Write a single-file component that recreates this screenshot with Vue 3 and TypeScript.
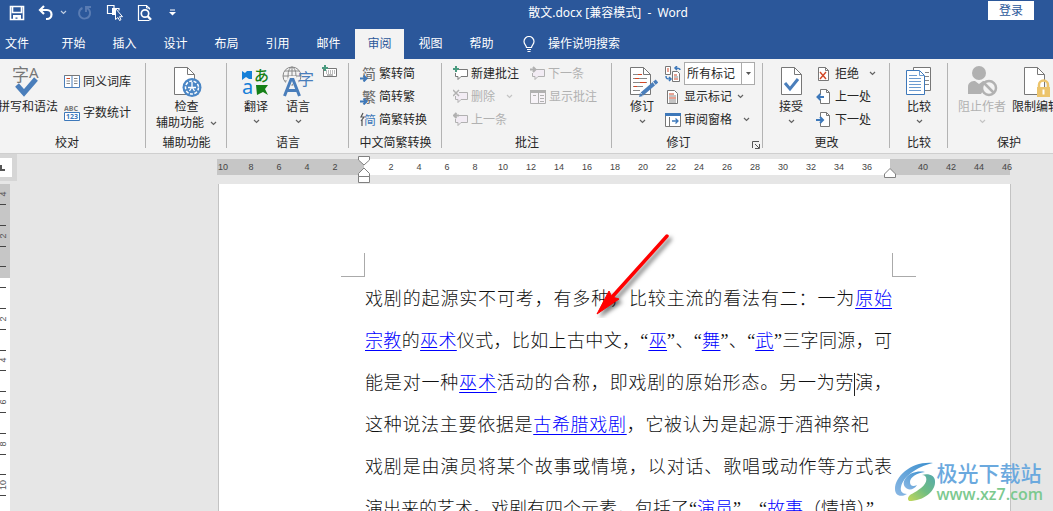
<script setup lang="ts">
import { h, ref } from 'vue'

const Chevron = () =>
  h('svg', { class: 'chevron', width: 7, height: 5, viewBox: '0 0 7 5', 'aria-hidden': 'true' }, [
    h('path', { d: 'M1 1l2.5 2.5L6 1', fill: 'none', stroke: 'currentColor', 'stroke-width': 1.2 }),
  ])

const tabs: string[] = ['开始', '插入', '设计', '布局', '引用', '邮件', '审阅', '视图', '帮助']
const activeTab = ref('审阅')
const markup = ref('所有标记')

const rulerCells: string[] = [
  ...['10', '8', '6', '4', '2', ''],
  ...Array.from({ length: 18 }, (_, i) => String((i + 1) * 2)),
  ...['', '40', '42', '44', '46'],
]

interface Mark { y: number; label: string }
const rulerMarks: Mark[] = [
  { y: 10, label: '4' }, { y: 52, label: '2' }, { y: 135, label: '2' }, { y: 176, label: '4' },
  { y: 218, label: '6' }, { y: 260, label: '8' }, { y: 301, label: '10' },
]
const rulerTicks: number[] = [20, 41, 62, 82, 103, 124, 145, 166, 186, 207, 228, 249, 270, 290, 311]

interface Run { text: string; link?: boolean; caret?: boolean }
const lines: { runs: Run[]; kind?: string }[] = [
  { runs: [{ text: '戏剧的起源实不可考，有多种，比较主流的看法有二：一为' }, { text: '原始', link: true }] },
  {
    runs: [
      { text: '宗教', link: true }, { text: '的' }, { text: '巫术', link: true },
      { text: '仪式，比如上古中文，“' }, { text: '巫', link: true }, { text: '”、“' },
      { text: '舞', link: true }, { text: '”、“' }, { text: '武', link: true }, { text: '”三字同源，可' },
    ],
  },
  {
    runs: [
      { text: '能是对一种' }, { text: '巫术', link: true },
      { text: '活动的合称，即戏剧的原始形态。另一为劳' }, { text: '', caret: true }, { text: '演，' },
    ],
  },
  {
    kind: 'short',
    runs: [
      { text: '这种说法主要依据是' }, { text: '古希腊戏剧', link: true },
      { text: '，它被认为是起源于酒神祭祀' },
    ],
  },
  { runs: [{ text: '戏剧是由演员将某个故事或情境，以对话、歌唱或动作等方式表' }] },
  {
    runs: [
      { text: '演出来的艺术。戏剧有四个元素，包括了“' }, { text: '演员', link: true },
      { text: '”、“' }, { text: '故事', link: true }, { text: '（情境）”、' },
    ],
  },
]
</script>

<template>
  <div class="word">
    <header class="chrome">
      <div class="titlebar">
        <div class="quick">
          <button class="q-save" aria-label="保存">
            <svg width="16" height="16" viewBox="0 0 16 16"><path d="M1.500 1.500h13v13h-13zM3.500 2v5.500h9V2" fill="none" stroke="#fff" stroke-width="1.600" /><path d="M4 10h8v4.500H8.500v-2h-2v2H4z" fill="#fff" /></svg>
          </button>
          <button class="q-undo" aria-label="撤消">
            <svg width="16" height="16" viewBox="0 0 16 16"><path d="M6 1L2 5l4 4M2 5h7a4.500 4.500 0 0 1 0 9H8" fill="none" stroke="#fff" stroke-width="2.200" /></svg>
          </button>
          <button class="q-more" aria-label="撤消选项"><Chevron /></button>
          <button class="q-redo" aria-label="重复">
            <svg width="16" height="16" viewBox="0 0 16 16"><path d="M9 7V2h5M9.500 2.500C12 4 13.500 6 13 9A5.500 5.500 0 1 1 5.500 3" fill="none" stroke="#5a7cb3" stroke-width="1.900" /></svg>
          </button>
          <button class="q-select" aria-label="选择对象">
            <svg width="18" height="18" viewBox="0 0 18 18"><path d="M8 4V1.500H1.500v8H6M6 4.500h7v2" fill="none" stroke="#fff" stroke-width="1.200" /><path d="M6 4h3v7H6z" fill="#fff" /><path d="M9.500 4.500v11l2.500-2 1.500 3 1.500-.8-1.500-3h3z" fill="#2b579a" stroke="#fff" /></svg>
          </button>
          <button class="q-preview" aria-label="打印预览">
            <svg width="16" height="18" viewBox="0 0 16 18"><path d="M12.500 5.500v-1l-3-3h-8v15h11" fill="none" stroke="#fff" stroke-width="1.200" /><path d="M9.500 1v3h3" fill="none" stroke="#fff" /><circle cx="8" cy="9.500" r="3.700" fill="none" stroke="#fff" stroke-width="1.700" /><path d="M10.500 12l3.500 3.800" stroke="#fff" stroke-width="2.400" /></svg>
          </button>
          <button class="q-custom" aria-label="自定义快速访问工具栏">
            <svg width="7" height="7" viewBox="0 0 7 7"><path d="M1 1h5" stroke="#fff" /><path d="M0 3h7L3.500 6.500z" fill="#fff" /></svg>
          </button>
        </div>
        <h1 class="title">散文.docx [兼容模式]&nbsp; -&nbsp; Word</h1>
        <button class="login">登录</button>
      </div>
      <nav class="tabs">
        <button class="tab file">文件</button>
        <button v-for="t in tabs" :key="t" class="tab" :class="{ active: t === activeTab }" @click="activeTab = t">{{ t }}</button>
        <button class="tell">
          <svg width="14" height="17" viewBox="0 0 14 17"><path d="M4.500 11.500c0-2-2.500-3-2.500-6a5 5 0 0 1 10 0c0 3-2.500 4-2.500 6zM5 13.500h4M5.500 15.500h3" fill="none" stroke="#fff" stroke-width="1.200" /></svg>
          <span>操作说明搜索</span>
        </button>
      </nav>
    </header>

    <section class="ribbon">
      <div class="group g-proof">
        <div class="body">
          <button class="big spell">
            <svg width="32" height="32" viewBox="0 0 32 32"><text x="0" y="15" font-size="17" fill="#777">字</text><text x="17" y="12" font-size="15" fill="#777">A</text><path d="M5 19l7 8L24 13" fill="none" stroke="#4a7ebb" stroke-width="5" /></svg>
            <span>拼写和语法</span>
          </button>
          <div class="col tall">
            <button class="small">
              <svg width="16" height="16" viewBox="0 0 16 16"><path d="M.5 1.500h15v12h-15zM8 2v12" fill="#fff" stroke="#4a7ebb" /><path d="M.5 1.500h15" stroke="#777" /><path d="M2.500 4.500H6" stroke="#d24726" /><path d="M2.500 7H6M2.500 9.500H6M10 4.500h3.500M10 7h3.500M10 9.500h3.500" stroke="#888" /></svg>
              <span>同义词库</span>
            </button>
            <button class="small">
              <svg width="16" height="17" viewBox="0 0 16 17"><text x="0" y="7" font-size="7" font-weight="700" fill="#777">ABC</text><path d="M.5 8.500h15v8H.5z" fill="#fff" stroke="#3d78ba" /><text x="2" y="15" font-size="7" font-weight="700" fill="#3d78ba">123</text></svg>
              <span>字数统计</span>
            </button>
          </div>
        </div>
        <div class="label">校对</div>
      </div>

      <div class="group g-access">
        <div class="body">
          <button class="big">
            <svg width="32" height="32" viewBox="0 0 32 32"><path d="M4.500 1.500h13l7 7v20h-20z" fill="#fff" stroke="#777" /><path d="M17.500 1.500v7h7" fill="none" stroke="#777" /><circle cx="22" cy="21.500" r="9.500" fill="#4a86c5" /><circle cx="22" cy="21.500" r="6.500" fill="none" stroke="#fff" stroke-width="1.500" stroke-dasharray="3 1.500" /><path d="M22 16v6M18 21.500h8M22 21l-2.500 4M22 21l2.500 4" stroke="#fff" stroke-width="1.300" /></svg>
            <span>检查</span>
            <span class="with-chev">辅助功能<Chevron /></span>
          </button>
        </div>
        <div class="label">辅助功能</div>
      </div>

      <div class="group g-lang">
        <div class="body">
          <button class="big w42">
            <svg width="32" height="32" viewBox="0 0 32 32"><text x="14" y="15" font-size="15" font-weight="500" fill="#158016">あ</text><text x="2" y="28" font-size="20" fill="#1680d8">a</text><path d="M2 5l3 2 2-2h5v8H9L6 11l-4 3z" fill="#1680d8" /><path d="M16 19h12l-3 4 3 6-5-3-6 3z" fill="#158016" /></svg>
            <span>翻译</span><Chevron />
          </button>
          <button class="big w42">
            <svg width="34" height="32" viewBox="0 0 34 32"><g fill="none" stroke="#888"><circle cx="11" cy="10" r="9" /><ellipse cx="11" cy="10" rx="4" ry="9" /><path d="M11 1v18M2 10h18M4 5h14M4 15h14" /></g><path d="M2 30L10 13h3l7 17M5 24.500h12" fill="none" stroke="#f3f3f3" stroke-width="6" /><path d="M3.500 30L10 13.500h2L18.500 30M6 24.500h10" fill="none" stroke="#4a7ebb" stroke-width="3" /><text x="17" y="19" font-size="16" fill="#4a7ebb">字</text></svg>
            <span>语言</span><Chevron />
          </button>
          <button class="keyboard" aria-label="更新输入法词典">
            <svg width="16" height="14" viewBox="0 0 16 14"><path d="M1.500 3.500h13v8h-13z" fill="#fff" stroke="#777" /><path d="M4 6h9M4 8h9" stroke="#777" stroke-dasharray="1 1" /><path d="M5 10h6" stroke="#777" /><path d="M3 0v6M0 3h6" stroke="#4a9b7f" stroke-width="2" /></svg>
          </button>
        </div>
        <div class="label">语言</div>
      </div>

      <div class="group g-convert">
        <div class="body">
          <div class="col">
            <button class="small"><svg width="16" height="16" viewBox="0 0 16 16"><text x="2" y="13" font-size="14" fill="#666">简</text><path d="M0 12.500h5M3.500 9.500l3 3-3 3" fill="none" stroke="#3d78ba" stroke-width="2" /></svg><span>繁转简</span></button>
            <button class="small"><svg width="16" height="16" viewBox="0 0 16 16"><text x="2" y="13" font-size="14" fill="#666">繁</text><path d="M0 12.500h5M3.500 9.500l3 3-3 3" fill="none" stroke="#3d78ba" stroke-width="2" /></svg><span>简转繁</span></button>
            <button class="small"><svg width="16" height="16" viewBox="0 0 16 16"><path d="M3 1L1 5l3 0-3 4M2 8v6" fill="none" stroke="#555" stroke-width="1.200" /><text x="4" y="13" font-size="12" fill="#3d78ba">简</text></svg><span>简繁转换</span></button>
          </div>
        </div>
        <div class="label">中文简繁转换</div>
      </div>

      <div class="group g-comment">
        <div class="body">
          <div class="col c1">
            <button class="small"><svg width="15" height="16" viewBox="0 0 15 16"><path d="M6 3.500h8.500v7H8l-3 3v-3H2.500V7" fill="#fff" stroke="#777" /><path d="M3 0v6M0 3h6" stroke="#4a9b7f" stroke-width="2" /></svg><span>新建批注</span></button>
            <button class="small" disabled><svg width="15" height="16" viewBox="0 0 15 16"><path d="M6 3.500h8.500v7H8l-3 3v-3H2.500V7" fill="#f2ecf4" stroke="#b1b1b1" /><path d="M0 1l6 6M6 1L0 7" stroke="#b1b1b1" stroke-width="1.500" /></svg><span>删除</span><Chevron /></button>
            <button class="small" disabled><svg width="15" height="16" viewBox="0 0 15 16"><path d="M6 3.500h8.500v7H8l-3 3v-3H2.500V7" fill="#f2ecf4" stroke="#b1b1b1" /><path d="M6 3.500H1M3.500 1L1 3.500 3.500 6" fill="none" stroke="#b1b1b1" stroke-width="2" /></svg><span>上一条</span></button>
          </div>
          <div class="col">
            <button class="small" disabled><svg width="15" height="16" viewBox="0 0 15 16"><path d="M6 3.500h8.500v7H8l-3 3v-3H2.500V7" fill="#f2ecf4" stroke="#b1b1b1" /><path d="M0 3.500h5M3 1l2.500 2.500L3 6" fill="none" stroke="#b1b1b1" stroke-width="2" /></svg><span>下一条</span></button>
            <button class="small" disabled><svg width="16" height="16" viewBox="0 0 16 16"><path d="M.5 1.500h15v13H.5z" fill="#f7f3f8" stroke="#b1b1b1" /><path d="M0 2.500h16" stroke="#b1b1b1" stroke-width="3" /><path d="M8.500 4v10M10 6.500h4M10 9.500h4M10 12.500h4M3 6.500h3" stroke="#b1b1b1" /></svg><span>显示批注</span></button>
          </div>
        </div>
        <div class="label">批注</div>
      </div>

      <div class="group g-track">
        <div class="body">
          <button class="big w46">
            <svg width="32" height="32" viewBox="0 0 32 32"><path d="M4.500 1.500h13l7 7v20h-20z" fill="#fff" stroke="#777" /><path d="M17.500 1.500v7h7" fill="none" stroke="#777" /><path d="M7 8.500h6M7 12.500h14M7 16.500h14M7 20.500h10M7 24.500h7" stroke="#888" /><path d="M12 8.500h4M9 12.500h4M14 16.500h6M8 20.500h3" stroke="#d24726" /><path d="M16 28L31 15" stroke="#4a7ebb" stroke-width="4" /><path d="M13 31l1-4 3 3z" fill="#4a7ebb" /><path d="M27 16l3 4" stroke="#f3f3f3" /></svg>
            <span>修订</span><Chevron />
          </button>
          <div class="col">
            <div class="small">
              <svg width="16" height="16" viewBox="0 0 16 16"><path d="M.5.500h5v8h-5zM7.500 5.500h5l2 2v8h-7z" fill="#fff" stroke="#777" /><path d="M2 3h2M2 5h2M9 9h3M9 13h4" stroke="#d24726" /><path d="M9 11h4" stroke="#888" /><path d="M15 4c0-2-2-2-5-2m2-2l-2 2 2 2M1 10c0 3 1 3 5 3m-2-2l2 2-2 2" fill="none" stroke="#3d78ba" stroke-width="1.500" /></svg>
              <div class="combo">
                <select v-model="markup" aria-label="显示以供审阅"><option>所有标记</option><option>简单标记</option><option>无标记</option></select>
                <span class="combo-arrow"><svg width="5" height="3" viewBox="0 0 5 3"><path d="M0 0h5L2.500 3z" fill="#555" /></svg></span>
              </div>
            </div>
            <button class="small"><svg width="16" height="16" viewBox="0 0 16 16"><path d="M2.500 1.500h7l3 3v10h-10z" fill="#fff" stroke="#777" /><path d="M4 5h5M4 9h7" stroke="#d24726" /><path d="M4 7h7M4 11h7M4 13h7" stroke="#888" /></svg><span>显示标记</span><Chevron /></button>
            <button class="small wide"><svg width="16" height="16" viewBox="0 0 16 16"><path d="M.5 1.500h15v13H.5z" fill="#fff" stroke="#777" /><path d="M0 2.500h16" stroke="#3d78ba" stroke-width="3" /><path d="M4.500 5v9" stroke="#777" /><path d="M7 9h6M10.500 6.500L13 9l-2.500 2.500" fill="none" stroke="#3d78ba" stroke-width="1.300" /></svg><span>审阅窗格</span><Chevron /></button>
          </div>
        </div>
        <div class="label">修订</div>
        <button class="launcher" aria-label="更改修订选项"><svg width="8" height="8" viewBox="0 0 8 8"><path d="M.5 7V.5H7M3 3l4 4M7.500 3v4.500H3" fill="none" stroke="#555" /></svg></button>
      </div>

      <div class="group g-change">
        <div class="body">
          <button class="big w46">
            <svg width="32" height="32" viewBox="0 0 32 32"><path d="M6.500 1.500h13l7 7v20h-20z" fill="#fff" stroke="#777" /><path d="M19.500 1.500v7h7" fill="none" stroke="#777" /><path d="M10 17l5 6 8-10" fill="none" stroke="#4a7ebb" stroke-width="3" /></svg>
            <span>接受</span><Chevron />
          </button>
          <div class="col">
            <button class="small reject"><svg width="14" height="16" viewBox="0 0 14 16"><path d="M2.500 1.500h7l3 3v10h-10z" fill="#fff" stroke="#777" /><path d="M9.500 1.500v3h3" fill="none" stroke="#777" /><path d="M4 6l6 7M10 6l-6 7" stroke="#d24726" stroke-width="1.400" /></svg><span>拒绝</span><Chevron /></button>
            <button class="small"><svg width="14" height="16" viewBox="0 0 14 16"><path d="M4.500 5V.500h6l3 3v11h-9v-4" fill="#fff" stroke="#777" /><path d="M10.500.500v3h3" fill="none" stroke="#777" /><path d="M8 8H2M4.500 5l-3 3 3 3" fill="none" stroke="#3d78ba" stroke-width="2" /></svg><span>上一处</span></button>
            <button class="small"><svg width="14" height="16" viewBox="0 0 14 16"><path d="M4.500 5V.500h6l3 3v11h-9v-4" fill="#fff" stroke="#777" /><path d="M10.500.500v3h3" fill="none" stroke="#777" /><path d="M0 8h6M4 5l3 3-3 3" fill="none" stroke="#3d78ba" stroke-width="2" /></svg><span>下一处</span></button>
          </div>
        </div>
        <div class="label">更改</div>
      </div>

      <div class="group g-compare">
        <div class="body">
          <button class="big">
            <svg width="32" height="32" viewBox="0 0 32 32"><path d="M10.500 1.500h17v23h-17z" fill="#fff" stroke="#777" /><path d="M22 6.500h4M22 10.500h4M22 14.500h4M22 18.500h4" stroke="#888" /><path d="M3.500 4.500h13l5 5v19h-18z" fill="#fff" stroke="#3d78ba" /><path d="M16.500 4.500v5h5M6 9.500h8M6 12.500h12M6 15.500h12M6 18.500h12M6 21.500h12M6 24.500h12" fill="none" stroke="#6c9bd0" /></svg>
            <span>比较</span><Chevron />
          </button>
        </div>
        <div class="label">比较</div>
      </div>

      <div class="group g-protect">
        <div class="body">
          <button class="big w54" disabled>
            <svg width="32" height="32" viewBox="0 0 32 32"><circle cx="13" cy="7" r="7" fill="#b1b1b1" /><path d="M2 28V21c0-5 4-6 7-6l4 3 4-3c2 0 4 1 5 2L15 28z" fill="#b1b1b1" /><circle cx="23" cy="22" r="7" fill="#f3f3f3" stroke="#b1b1b1" stroke-width="2.500" /><path d="M18 17l10 10" stroke="#b1b1b1" stroke-width="2.500" /></svg>
            <span>阻止作者</span><Chevron />
          </button>
          <button class="big w54">
            <svg width="32" height="32" viewBox="0 0 32 32"><path d="M4.500 1.500h13l7 7v20h-20z" fill="#fff" stroke="#777" /><path d="M17.500 1.500v7h7" fill="none" stroke="#777" /><path d="M19 22v-3a4.500 4.500 0 0 1 9 0v3" fill="none" stroke="#ecc46c" stroke-width="2.500" /><path d="M17 21h13v10H17z" fill="#ecc46c" /><path d="M23.500 23.500v5" stroke="#fff" stroke-width="2" /></svg>
            <span>限制编辑</span>
          </button>
        </div>
        <div class="label">保护</div>
      </div>
    </section>

    <main class="workspace">
      <div class="corner">
        <button class="tabstop" aria-label="制表符"><svg width="5" height="6" viewBox="0 0 5 6"><path d="M1 0v5h4" fill="none" stroke="#555" stroke-width="2" /></svg></button>
      </div>
      <div class="ruler">
        <div class="cells"><span v-for="(c, i) in rulerCells" :key="i">{{ c }}</span></div>
        <svg class="indent left" width="12" height="28" viewBox="0 0 12 28"><path d="M.5.500h11v3.500L6 9 .5 4zM6 12l5.500 5.500v3H.5v-3zM.5 20.500h11v6H.5z" fill="#fff" stroke="#808080" /></svg>
        <svg class="indent right" width="12" height="10" viewBox="0 0 12 10"><path d="M6 .5L11.500 6v3.500H.5V6z" fill="#fff" stroke="#808080" /></svg>
      </div>
      <svg class="vruler" width="10" height="327" viewBox="0 0 10 327">
        <path d="M0 0h10v327H0z" fill="#fff" />
        <path d="M0 0h10v94H0z" fill="#c6c6c6" />
        <path v-for="t in rulerTicks" :key="t" :d="`M0 ${t + 0.5}h6`" stroke="#444" />
        <text v-for="m in rulerMarks" :key="m.y" :transform="`translate(6 ${m.y}) rotate(-90)`" text-anchor="middle" font-size="9" fill="#555">{{ m.label }}</text>
      </svg>
      <article class="page">
        <i class="crop tl"></i><i class="crop tr"></i>
        <div class="text">
          <p v-for="(line, i) in lines" :key="i" :class="line.kind"><template v-for="(r, j) in line.runs" :key="j"><a v-if="r.link" href="#">{{ r.text }}</a><i v-else-if="r.caret" class="caret"></i><template v-else>{{ r.text }}</template></template></p>
        </div>
        <svg class="arrow" width="90" height="90" viewBox="0 0 90 90">
          <g class="arrow-shape"><path d="M76 8L22 68" stroke="#f00" stroke-width="3.500" stroke-linecap="round" /><path d="M6 86L18 63l3 6 7 2z" fill="#f00" stroke="#f00" /></g>
        </svg>
      </article>
      <div class="watermark">
        <svg width="42" height="42" viewBox="0 0 42 42">
          <defs>
            <linearGradient id="wa" x1="1" y1="0" x2="0" y2="1"><stop offset="0" stop-color="#3b8fce" /><stop offset="1" stop-color="#8bb8e4" /></linearGradient>
            <linearGradient id="wb" x1="1" y1="0" x2="0" y2="1"><stop offset="0" stop-color="#54a9ad" /><stop offset=".5" stop-color="#70bd83" /><stop offset="1" stop-color="#c5d858" /></linearGradient>
          </defs>
          <path d="M39 2C18 0 1 15 1 28c0 6 5 9 12 5-5 0-7-3-6-7C9 16 22 6 39 2z" fill="url(#wa)" />
          <path d="M31 11C17 8 6 19 11 26c3 4 9 3 12-2-4 2-7 1-7-3 0-5 7-9 15-10z" fill="url(#wa)" />
          <path d="M28 14c6 0 6 8-1 13-5 4-8 5-11 7-2 2-3 4-1 6 15 0 27-10 26-20 0-5-6-8-13-6z" fill="url(#wb)" />
        </svg>
        <div class="wm-text"><strong>极光下载站</strong><span>www.xz7.com</span></div>
      </div>
    </main>
  </div>
</template>

<style>
html, body { margin: 0; height: 100%; overflow: hidden; }
#app { height: 100%; }
</style>

<style scoped>
.word {
  height: 100vh;
  display: flex;
  flex-direction: column;
  overflow: hidden;
  background: #e6e6e6;
  color: #262626;
  font-family: "Noto Sans", "Noto Sans CJK SC", sans-serif;
  font-size: 12px;
  line-height: 16px;
}
button { border: 0; margin: 0; padding: 0; background: none; font: inherit; color: inherit; white-space: nowrap; }
button:disabled { color: #b1b1b1; }
svg { display: block; flex: none; }
.chrome { background: #2b579a; color: #fff; flex: none; }
.titlebar { height: 29px; display: flex; align-items: flex-start; }
.quick { display: flex; align-items: center; height: 25px; width: 190px; padding-left: 9px; box-sizing: border-box; flex: none; }
.q-undo { margin-left: 13px; }
.q-more { margin-left: 6px; }
.q-redo { margin-left: 10px; }
.q-select { margin-left: 13px; }
.q-preview { margin-left: 13px; }
.q-custom { margin-left: 16px; }
.title { flex: 1; margin: 0; padding-left: 38px; font-size: 12px; font-weight: 400; line-height: 26px; text-align: center; white-space: pre; }
.login { width: 46px; height: 19px; margin: 1px 19px 0 0; background: #fff; color: #2b579a; }
.tabs { display: flex; gap: 2px; height: 30px; }
.tab { width: 49px; }
.tab.file { width: 34px; margin-right: 13px; }
.tab.active { background: #f3f3f3; color: #2b579a; }
.tell { display: flex; align-items: center; gap: 12px; margin-left: 14px; }

.ribbon { display: flex; flex: none; height: 94px; overflow: hidden; background: #f3f3f3; border-bottom: 1px solid #cfcfcf; }
.group { position: relative; flex: none; box-sizing: border-box; }
.group::after { content: ""; position: absolute; right: 0; top: 4px; bottom: 5px; width: 1px; background: #b3b3b3; }
.body { display: flex; height: 76px; }
.label { text-align: center; line-height: 16px; white-space: nowrap; }
.chevron { opacity: 0.7; }
.big { display: flex; flex-direction: column; align-items: center; padding-top: 7px; flex: none; }
.big span { margin-top: 1px; }
.big .with-chev { margin-top: 0; }
.big .chevron { margin-top: 4px; }
.with-chev { display: flex; align-items: center; gap: 6px; }
.with-chev .chevron { margin-top: 0; }
.col { display: flex; flex-direction: column; padding-top: 3px; flex: none; }
.small { display: flex; align-items: center; gap: 3px; height: 23px; }
.small .chevron { margin-left: 2px; }
.small.wide .chevron { margin-left: 8px; }
.small.reject .chevron { margin-left: 5px; }
.tall { padding-top: 7px; }
.tall .small { height: 31px; }
.w42 { width: 42px; }
.w46 { width: 46px; }
.w54 { width: 54px; }
.g-proof { width: 146px; }
.g-proof .label { padding-right: 12px; }
.spell { width: 60px; margin: 0 6px 0 -2px; }
.g-access { width: 81px; }
.g-access .body, .g-compare .body { justify-content: center; }
.g-lang { width: 122px; }
.g-lang .body { padding-left: 8px; }
.keyboard { align-self: flex-start; margin: 6px 0 0 3px; }
.g-convert { width: 93px; }
.g-convert .body { padding-left: 11px; }
.g-comment { width: 170px; }
.g-comment .body { padding-left: 11px; }
.c1 { width: 77px; }
.c1 .small .chevron { margin-left: 8px; }
.g-track { width: 151px; }
.g-track .body { padding-left: 7px; }
.g-track .label { padding-right: 18px; }
.g-change { width: 127px; }
.g-change .body { padding-left: 5px; }
.g-change .big { margin-right: 2px; }
.g-change .small { gap: 5px; }
.g-compare { width: 58px; }
.g-protect { width: 122px; }
.g-protect .body { padding-left: 7px; }
.combo { position: relative; width: 71px; height: 23px; box-sizing: border-box; border: 1px solid #ababab; background: #fff; }
.combo select { appearance: none; width: 100%; height: 100%; padding: 0 0 0 2px; border: 0; background: none; font: inherit; color: inherit; }
.combo-arrow { position: absolute; right: 0; top: 0; width: 12px; height: 21px; border-left: 1px solid #ababab; display: flex; align-items: center; justify-content: center; pointer-events: none; }
.launcher { position: absolute; right: 3px; bottom: 4px; }

.workspace { position: relative; flex: 1; min-height: 0; display: grid; grid-template-columns: 17px 1fr 793px 42px; grid-template-rows: 30px 1fr; }
.corner { height: 27px; background: #d6d6d6; grid-area: 1 / 1; padding-top: 4px; box-sizing: border-box; }
.tabstop { display: flex; align-items: center; justify-content: flex-start; width: 12px; height: 19px; background: #fff; }
.ruler { position: relative; grid-area: 1 / 3; height: 16px; margin: 5px 1px 0 -1px; background: linear-gradient(90deg, #c6c6c6 147px, #fff 147px 673px, #c6c6c6 673px); font: 9px/17px "Liberation Sans", sans-serif; color: #444; }
.cells { display: flex; margin-left: -8px; }
.cells span { width: 28px; flex: none; text-align: center; }
.indent { position: absolute; }
.indent.left { left: 141px; top: -3px; }
.indent.right { left: 667px; top: 9px; }
.vruler { grid-area: 2 / 1; font-family: "Liberation Sans", sans-serif; }
.page { position: relative; grid-area: 2 / 3; background: #fff; border: solid #c3c3c3; border-width: 0 1px; padding: 94px 118px 0 146px; min-height: 0; overflow: hidden; }
.text { color: #111; font: 300 18px/42px "Liberation Serif", "Noto Sans CJK SC", serif; }
.text p { margin: 0; height: 42px; text-align: justify; text-align-last: justify; white-space: nowrap; }
.text p.short { padding-right: 23px; }
.text a { color: #00f; text-decoration: underline; text-decoration-thickness: 1px; text-underline-offset: 3px; }
.caret { display: inline-block; width: 1px; height: 23px; margin-right: -1px; background: #222; vertical-align: middle; }
.crop { position: absolute; top: 69px; width: 23px; height: 23px; border: 0 solid #aaa; border-bottom-width: 1px; }
.crop.tl { left: 122px; border-right-width: 1px; }
.crop.tr { left: 673px; border-left-width: 1px; }
.arrow { position: absolute; left: 372px; top: 44px; }
.arrow-shape { filter: drop-shadow(3px 3px 2px #0008); }
.watermark { position: absolute; right: 10px; bottom: 8px; display: flex; align-items: center; gap: 1px; }
.wm-text { display: flex; flex-direction: column; }
.wm-text strong { font-size: 21px; line-height: 24px; font-weight: 500; color: #6ba9de; }
.wm-text span { font: 600 16px/18px "Open Sans", sans-serif; color: #7cc98f; }
</style>
